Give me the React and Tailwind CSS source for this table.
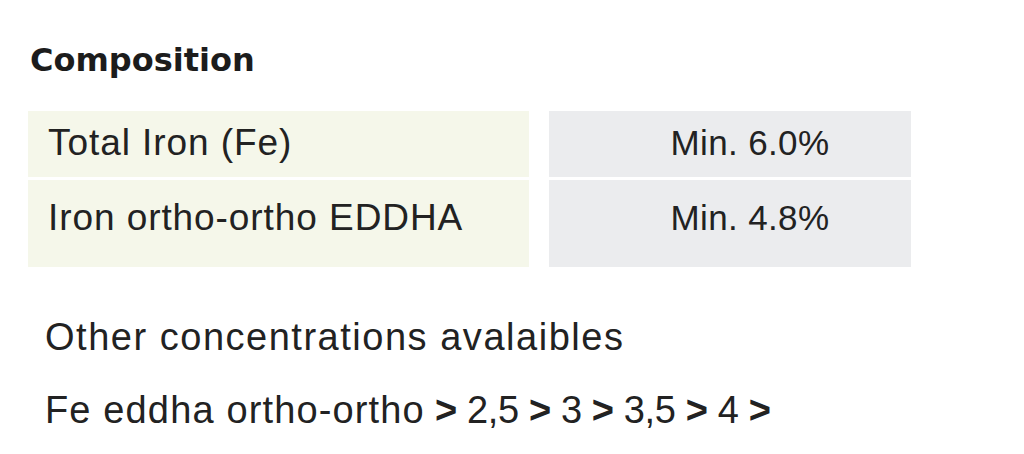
import React from "react";

const rows = [
  { label: "Total Iron (Fe)", value: "Min. 6.0%", h: "h-[66px]", pt: "pt-[10px]" },
  { label: "Iron ortho-ortho EDDHA", value: "Min. 4.8%", h: "h-[87px]", pt: "pt-[16px]" },
];

const steps = ["2,5", "3", "3,5", "4"];

const App = () => {
  return (
    <div className="w-[1024px] h-[454px] bg-white text-[#222] pl-[28px] pt-[40px] font-['Liberation_Sans',Arial,sans-serif]">
      <h2 className="pl-[2px] text-[32px] leading-[40px] font-bold text-[#1c1c1c] font-['DejaVu_Sans',sans-serif]">
        Composition
      </h2>

      <div className="mt-[31px] flex flex-col gap-[3px]">
        {rows.map((row) => (
          <div key={row.label} className={`flex gap-[20px] ${row.h}`}>
            <div className={`w-[501px] bg-[#f5f7ea] pl-[20px] ${row.pt} text-[37px] leading-[44px] tracking-[0.025em]`}>
              {row.label}
            </div>
            <div className={`w-[362px] bg-[#ebecee] pl-[40px] text-center ${row.pt} text-[35px] leading-[44px] tracking-[0.01em]`}>
              {row.value}
            </div>
          </div>
        ))}
      </div>

      <p className="mt-[46px] pl-[17px] text-[38px] leading-[48px] tracking-[0.04em]">
        Other concentrations avalaibles
      </p>
      <p className="mt-[25px] pl-[17px] text-[38px] leading-[48px]">
        <span className="tracking-[0.03em]">Fe eddha ortho-ortho</span>
        <span className="tracking-[-0.01em]">
          {steps.map((s) => (
            <React.Fragment key={s}>
              {" "}
              <b className="font-bold">&gt;</b> {s}
            </React.Fragment>
          ))}{" "}
          <b className="font-bold">&gt;</b>
        </span>
      </p>
    </div>
  );
};

export default App;
